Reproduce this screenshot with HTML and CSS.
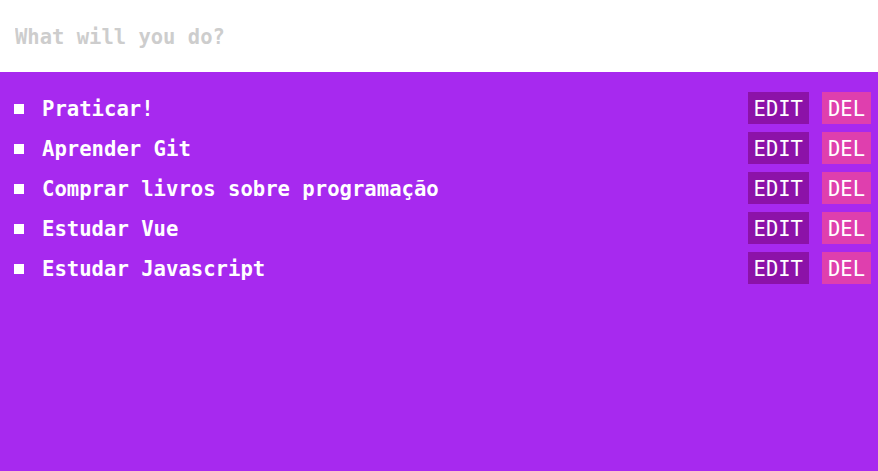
FILE: index.html
```html
<!DOCTYPE html>
<html>
<head>
<meta charset="utf-8">
<link rel="stylesheet" href="styles.css">
</head>
<body>
<div class="app">
  <input class="new-todo" type="text" placeholder="What will you do?">
  <ul class="todos">
    <li class="todo"><span class="bullet"></span><span class="label">Praticar!</span><button class="btn edit">EDIT</button><button class="btn del">DEL</button></li>
    <li class="todo"><span class="bullet"></span><span class="label">Aprender Git</span><button class="btn edit">EDIT</button><button class="btn del">DEL</button></li>
    <li class="todo"><span class="bullet"></span><span class="label">Comprar livros sobre programação</span><button class="btn edit">EDIT</button><button class="btn del">DEL</button></li>
    <li class="todo"><span class="bullet"></span><span class="label">Estudar Vue</span><button class="btn edit">EDIT</button><button class="btn del">DEL</button></li>
    <li class="todo"><span class="bullet"></span><span class="label">Estudar Javascript</span><button class="btn edit">EDIT</button><button class="btn del">DEL</button></li>
  </ul>
</div>
</body>
</html>
```
FILE: styles.css
```css
html, body {
  margin: 0;
  padding: 0;
  height: 100%;
}
body {
  background: #a729ef;
  font-family: "DejaVu Sans Mono", monospace;
}
.app {
  display: flex;
  flex-direction: column;
}
.new-todo {
  box-sizing: border-box;
  height: 72px;
  width: 100%;
  border: none;
  outline: none;
  padding: 2px 15px 0;
  background: #fff;
  font-family: "DejaVu Sans Mono", monospace;
  font-weight: bold;
  font-size: 20.5px;
  color: #333;
}
.new-todo::placeholder {
  color: #cdcdcd;
}
.todos {
  list-style: none;
  margin: 0;
  padding: 20px 7px 0 14px;
  display: flex;
  flex-direction: column;
  gap: 8px;
}
.todo {
  display: flex;
  align-items: center;
  height: 32px;
}
.bullet {
  width: 10px;
  height: 10px;
  background: #fff;
  margin: 1px 18px 0 0;
}
.label {
  flex: 1;
  padding-top: 2px;
  color: #fff;
  font-weight: bold;
  font-size: 20.6px;
}
.btn {
  box-sizing: border-box;
  height: 32px;
  border: none;
  padding: 2px 6px 0;
  font-family: "DejaVu Sans Mono", monospace;
  font-size: 20.5px;
  color: #fff;
  cursor: pointer;
}
.edit {
  background: #8c12a8;
  margin-right: 13px;
}
.del {
  background: #df3fae;
}
```
